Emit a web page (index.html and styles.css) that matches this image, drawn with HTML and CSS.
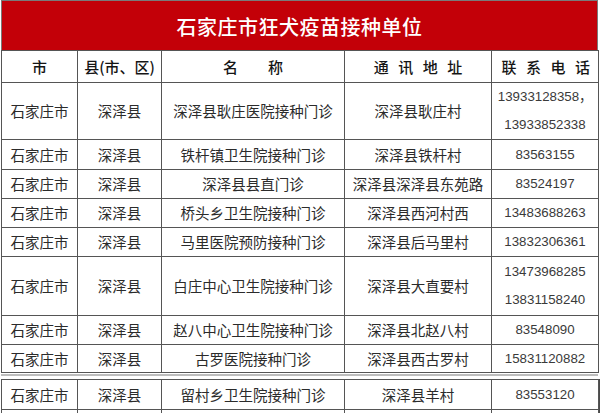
FILE: index.html
```html
<!DOCTYPE html>
<html lang="zh-CN">
<head>
<meta charset="utf-8">
<title>石家庄市狂犬疫苗接种单位</title>
<link rel="stylesheet" href="styles.css">
</head>
<body>
<div class="sheet">
  <div class="title">石家庄市狂犬疫苗接种单位</div>
  <table class="grid">
    <colgroup>
      <col class="c-city"><col class="c-county"><col class="c-name"><col class="c-addr"><col class="c-tel">
    </colgroup>
    <thead>
      <tr class="head">
        <th>市</th>
        <th>县(市、区)</th>
        <th>名　　称</th>
        <th class="spaced">通讯地址</th>
        <th class="spaced">联系电话</th>
      </tr>
    </thead>
    <tbody>
      <tr class="h57">
        <td>石家庄市</td><td>深泽县</td><td>深泽县耿庄医院接种门诊</td><td>深泽县耿庄村</td>
        <td class="num lines">13933128358，<br>13933852338</td>
      </tr>
      <tr class="h30">
        <td>石家庄市</td><td>深泽县</td><td>铁杆镇卫生院接种门诊</td><td>深泽县铁杆村</td><td class="num">83563155</td>
      </tr>
      <tr class="h29">
        <td>石家庄市</td><td>深泽县</td><td>深泽县县直门诊</td><td>深泽县深泽县东苑路</td><td class="num">83524197</td>
      </tr>
      <tr class="h29">
        <td>石家庄市</td><td>深泽县</td><td>桥头乡卫生院接种门诊</td><td>深泽县西河村西</td><td class="num">13483688263</td>
      </tr>
      <tr class="h29">
        <td>石家庄市</td><td>深泽县</td><td>马里医院预防接种门诊</td><td>深泽县后马里村</td><td class="num">13832306361</td>
      </tr>
      <tr class="h59">
        <td>石家庄市</td><td>深泽县</td><td>白庄中心卫生院接种门诊</td><td>深泽县大直要村</td>
        <td class="num lines">13473968285<br>13831158240</td>
      </tr>
      <tr class="h29">
        <td>石家庄市</td><td>深泽县</td><td>赵八中心卫生院接种门诊</td><td>深泽县北赵八村</td><td class="num">83548090</td>
      </tr>
      <tr class="h28">
        <td>石家庄市</td><td>深泽县</td><td>古罗医院接种门诊</td><td>深泽县西古罗村</td><td class="num">15831120882</td>
      </tr>
    </tbody>
  </table>
  <div class="seam"></div>
  <table class="grid next">
    <colgroup>
      <col class="c-city"><col class="c-county"><col class="c-name"><col class="c-addr"><col class="c-tel">
    </colgroup>
    <tbody>
      <tr class="h30">
        <td>石家庄市</td><td>深泽县</td><td>留村乡卫生院接种门诊</td><td>深泽县羊村</td><td class="num">83553120</td>
      </tr>
      <tr class="h29">
        <td></td><td></td><td></td><td></td><td></td>
      </tr>
    </tbody>
  </table>
</div>
</body>
</html>
```

FILE: styles.css
```css
html, body {
  margin: 0;
  padding: 0;
  background: #ffffff;
}

body {
  font-family: "Noto Sans CJK SC", "Noto Sans", sans-serif;
  color: #2b2b2b;
}

.sheet {
  width: 597px;
  margin-left: 1px;
}

.title {
  box-sizing: border-box;
  height: 50px;
  background: #c30008;
  border: 1px solid #7a7a7a;
  border-bottom: none;
  color: #ffffff;
  font-size: 20px;
  font-weight: 500;
  line-height: 52px;
  text-align: center;
  letter-spacing: 0.5px;
}

.grid {
  width: 597px;
  table-layout: fixed;
  border-collapse: collapse;
}

.c-city { width: 76px; }
.c-county { width: 84px; }
.c-name { width: 183px; }
.c-addr { width: 147px; }
.c-tel { width: 107px; }

.grid th,
.grid td {
  border: 1px solid #555555;
  padding: 0;
  text-align: center;
  vertical-align: middle;
  white-space: nowrap;
  font-size: 14.5px;
  line-height: 20px;
}

.grid th {
  font-weight: 500;
  font-size: 15px;
  color: #151515;
}

.head { height: 32px; }

.grid th.spaced {
  letter-spacing: 9.5px;
  padding-left: 9.5px;
}

.grid td.num {
  font-family: "Liberation Sans", Arial, sans-serif;
  font-size: 13.3px;
  color: #3a3a3a;
}

.grid td.lines {
  line-height: 28px;
}

.h28 { height: 28px; }
.h29 { height: 29px; }
.h30 { height: 30px; }
.h57 { height: 57px; }
.h59 { height: 59px; }

.seam {
  height: 2px;
  margin: 1px 0 3px;
  background: #bdbdbd;
}

.next {
  box-shadow: 2px 0 0 #4a4a4a;
}
```
